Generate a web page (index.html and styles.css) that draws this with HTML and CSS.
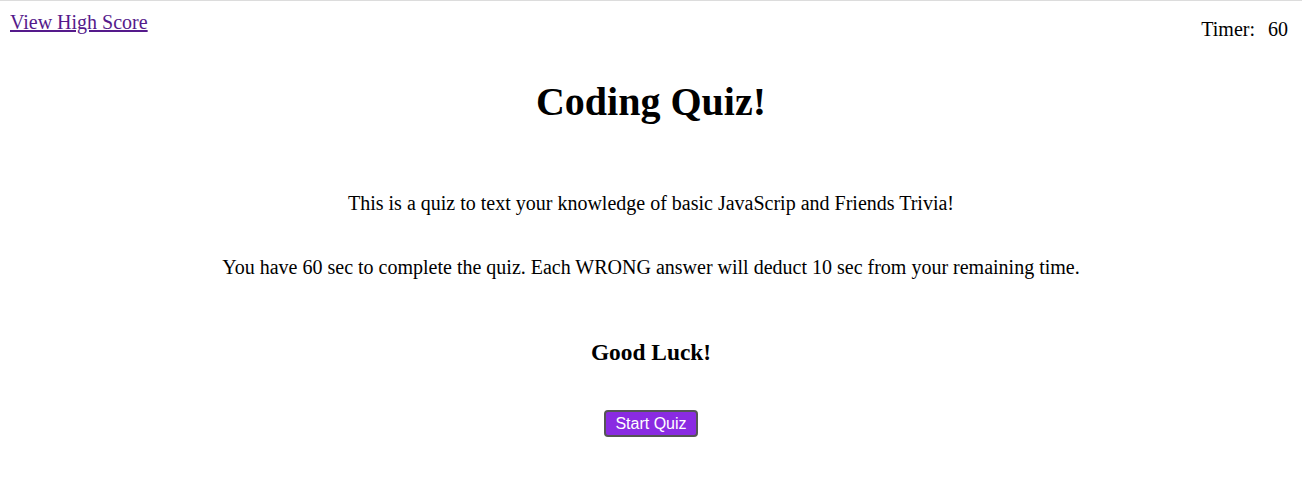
FILE: index.html
```html
<!DOCTYPE html>
<html lang="en">
<head>
<meta charset="utf-8">
<title>Coding Quiz</title>
<link rel="stylesheet" href="styles.css">
</head>
<body>
<header class="top-bar">
  <a class="score-link" href="#">View High Score</a>
  <div class="timer">Timer: <span class="timer-value">60</span></div>
</header>
<main class="intro">
  <h1 class="title">Coding Quiz!</h1>
  <p class="text">This is a quiz to text your knowledge of basic JavaScrip and Friends Trivia!</p>
  <p class="text">You have 60 sec to complete the quiz. Each WRONG answer will deduct 10 sec from your remaining time.</p>
  <h3 class="luck">Good Luck!</h3>
  <button class="start-btn" type="button">Start Quiz</button>
</main>
</body>
</html>
```
FILE: styles.css
```css
html {
  border-top: 1px solid #dcdcdc;
}
body {
  margin: 10px 10px 8px;
  font-family: "Liberation Serif", "Times New Roman", serif;
  font-size: 20px;
  color: #000;
  background: #fff;
}
.top-bar {
  display: flex;
  justify-content: space-between;
  align-items: flex-start;
}
.score-link {
  color: #551a8b;
  text-decoration: underline;
}
.timer {
  margin-top: 7px;
  margin-right: 4px;
}
.timer-value {
  margin-left: 8px;
}
.intro {
  display: flex;
  flex-direction: column;
  align-items: center;
  text-align: center;
}
.title {
  font-size: 40px;
  margin: 37px 0 0;
}
.text {
  margin: 0;
}
.title + .text {
  margin-top: 67px;
}
.text + .text {
  margin-top: 41px;
}
.luck {
  font-size: 23.4px;
  margin: 60px 0 0;
}
.start-btn {
  margin-top: 44px;
  font-family: "Liberation Sans", Arial, sans-serif;
  font-size: 16px;
  color: #fff;
  background: #8a2be2;
  border: 2px solid #555;
  border-radius: 4px;
  padding: 1px 9.5px;
  height: 27px;
}
```
